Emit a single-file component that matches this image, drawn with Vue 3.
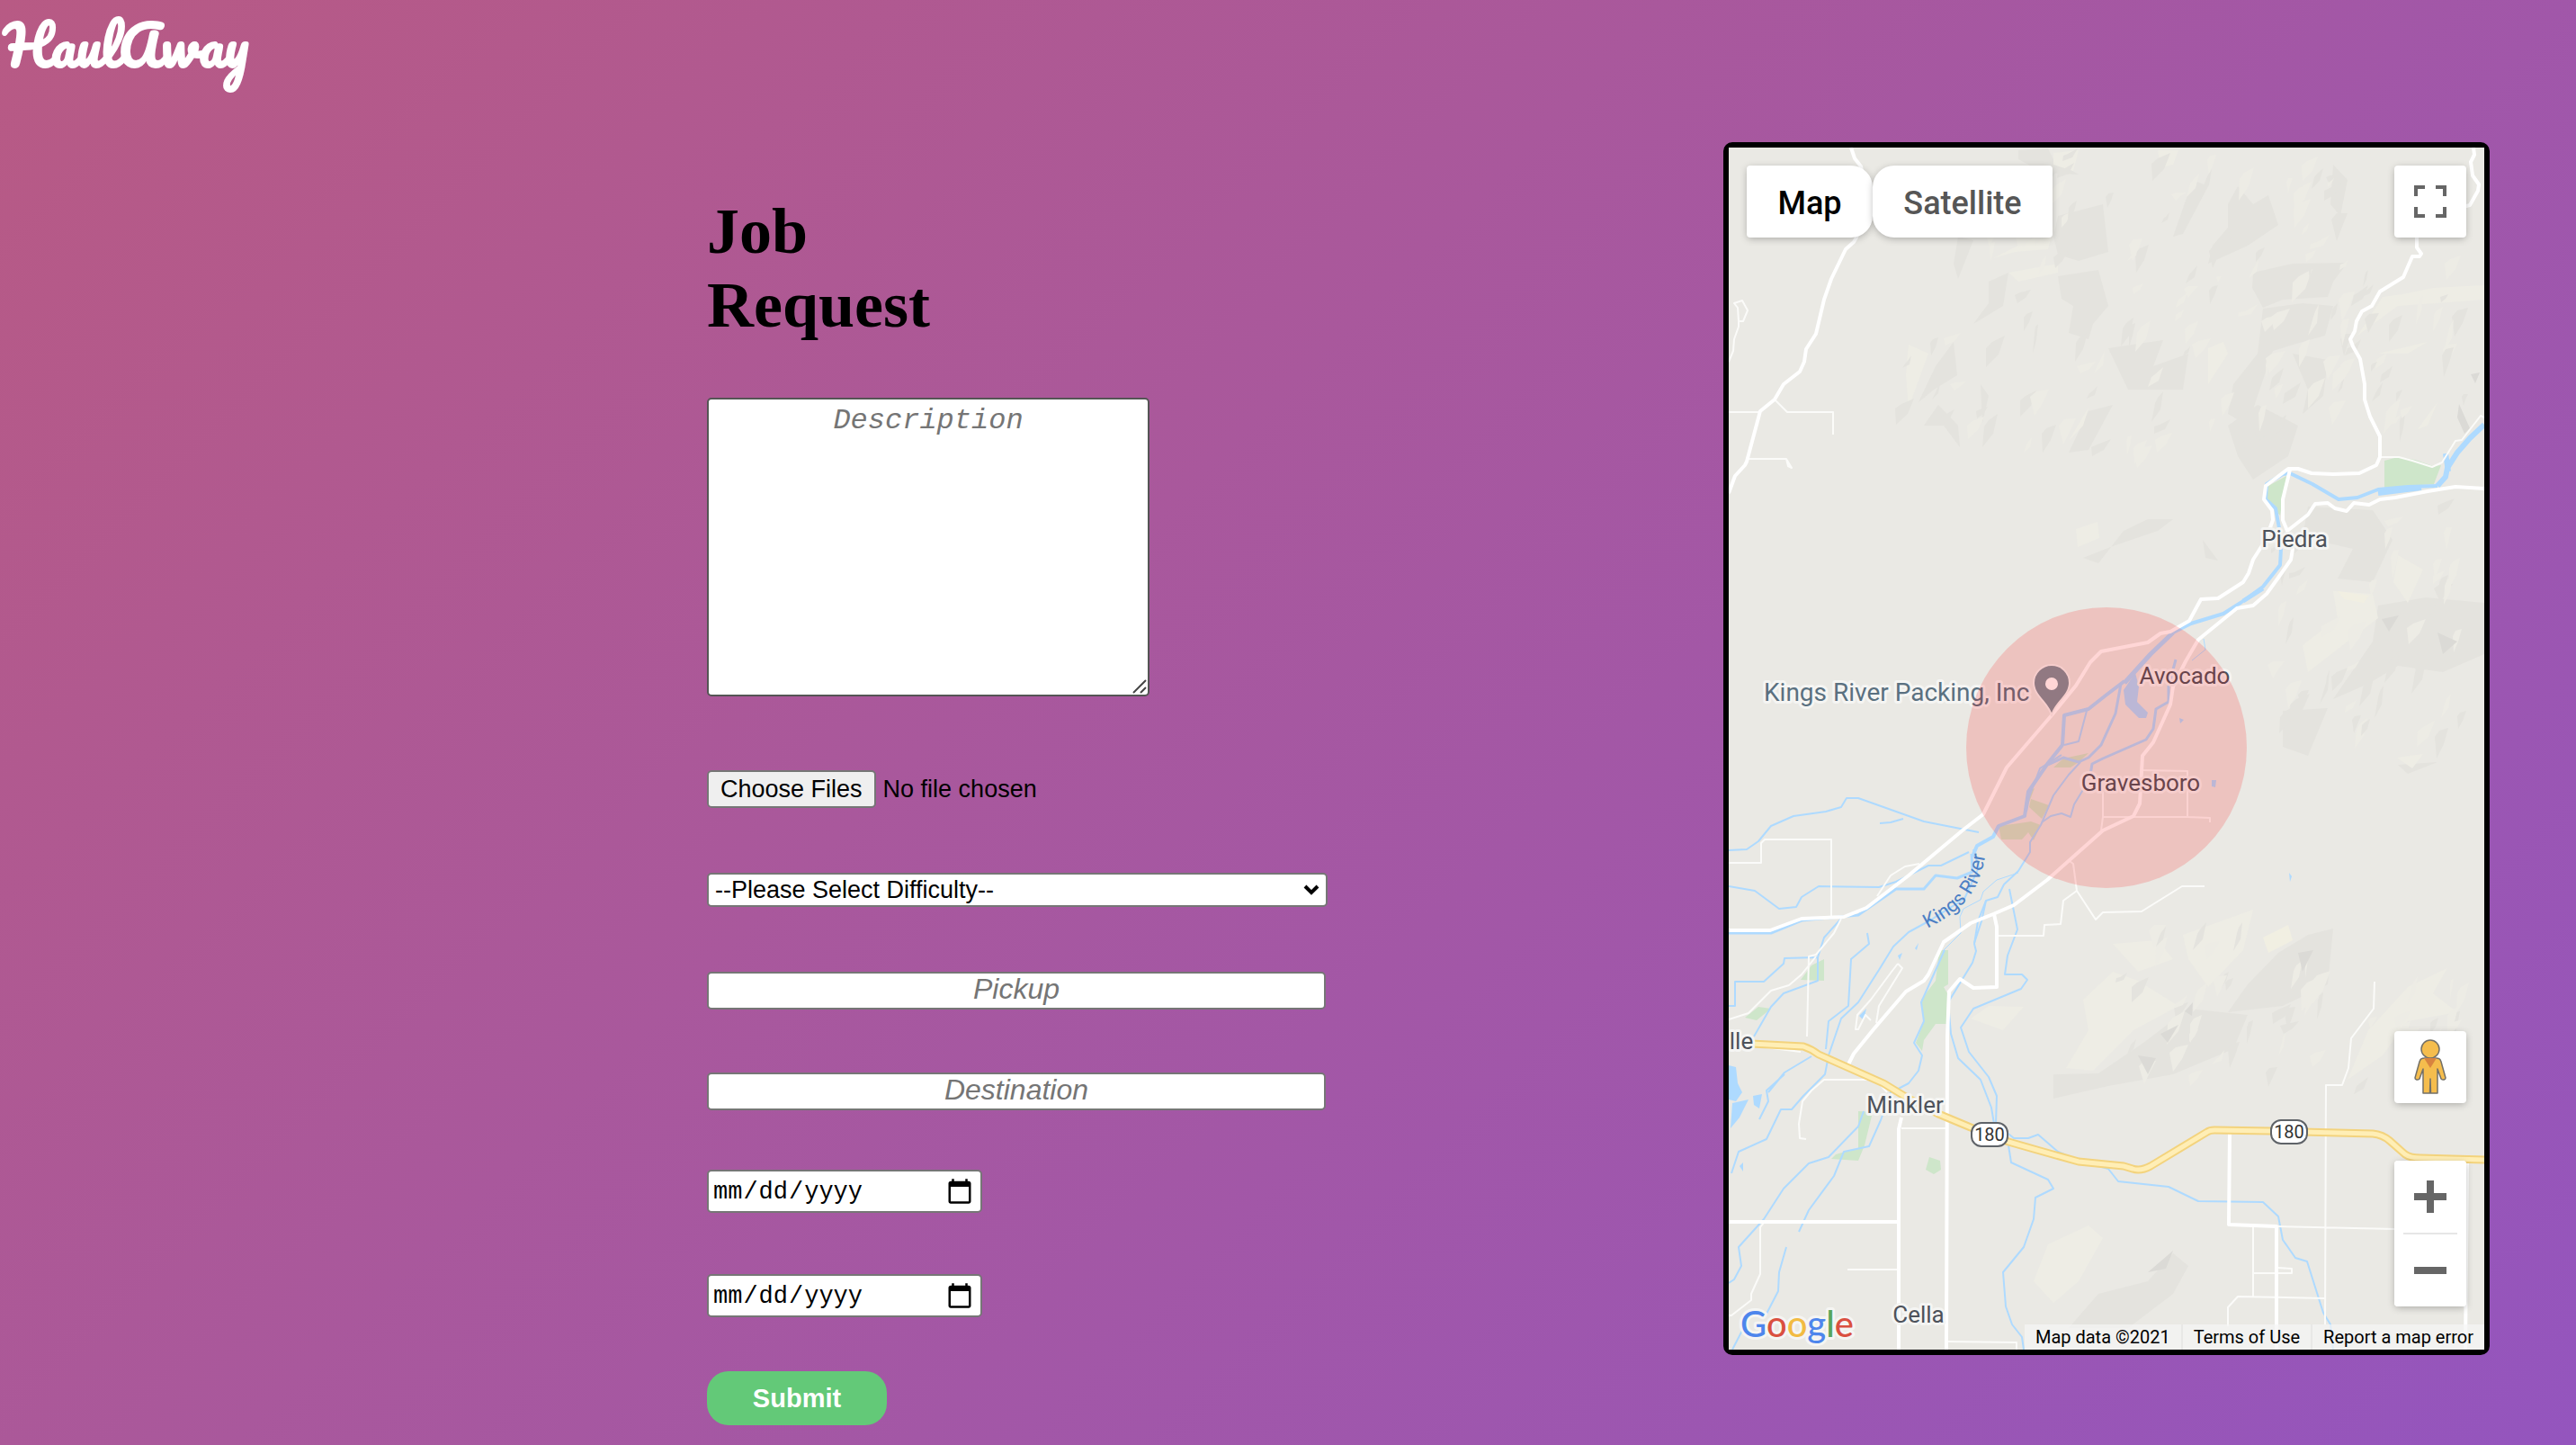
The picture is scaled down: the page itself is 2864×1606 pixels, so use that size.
<script setup>
import { ref } from 'vue'

const mapType = ref('map')
const difficulty = ref('')

const places = [
  { id: 'pickup', label: 'Pickup' },
  { id: 'destination', label: 'Destination' },
]
const dates = [
  { id: 'start', label: 'Start date' },
  { id: 'end', label: 'End date' },
]

const hillsDark = [
  '583,139 627,129 688,128 672,149 666,166 616,169 594,178 582,156',
  '594,179 638,173 672,176 663,209 638,216 605,226 588,276 577,309 555,296 561,263 588,229',
  '566,43 583,63 600,53 611,86 577,109 533,129 538,109 555,89 555,63',
  '366,76 416,63 422,116 389,126 366,119 361,99',
  '322,3 355,1 361,13 389,30 350,28 322,13',
  '366,143 411,136 422,176 405,196 400,213 378,206 383,176 370,168',
  '289,149 311,139 305,176 272,196 289,173',
  '255,99 272,103 255,146 250,129',
  '250,216 254,253 228,269 211,283 230,243',
  '280,263 289,276 282,306',
  '233,286 255,309 257,333 239,309 217,309',
  '422,223 483,214 472,243 511,229 505,269 472,269 444,269',
  '400,293 427,286 400,336 378,339',
  '627,229 666,236 661,276 638,296 644,269',
  '555,309 588,286 633,309 622,343 583,369 566,343',
  '672,19 688,36 680,76 669,63',
  '516,36 533,43 505,96 494,99',
  '722,509 775,500 840,506 840,563 794,583 744,576 711,596 672,613 716,549',
  '644,399 716,403 738,436 716,483 677,479 694,446 638,433',
  '394,456 427,443 477,426 494,413 466,413 439,426 411,462',
  '527,436 544,459 530,456',
  '616,626 666,623 644,676 616,666',
  '744,686 788,683 755,696',
  '611,895 644,875 672,868 666,930 616,954 555,961 577,930',
  '461,995 511,957 577,964 561,1002 494,1030 422,1043 361,1057 361,1030 411,1029',
  '511,1243 494,1274 444,1312 378,1312 411,1274 466,1260 494,1229',
]
const hillsDarker = [
  '788,539 810,549 794,563', '633,895 650,892 638,916', '455,1009 475,1012 466,1030',
  '480,985 500,975 488,995', '812,285 824,312 818,318 810,300', '494,1226 486,1246 466,1250',
  '726,524 745,520 734,538', '507,960 516,950 515,965', '825,252 835,250 830,262',
]
const hillsLight = [
  '672,493 716,496 722,523 688,549 644,583 638,553 677,523',
  '744,453 772,469 755,506 739,483',
  '394,947 427,916 455,926 500,954 450,981 405,1026 375,1023 400,981',
  '427,885 477,881 494,902 455,916',
  '505,875 583,847 572,892 533,933 511,902',
  '269,968 289,954 328,955 305,981',
  '355,1219 400,1198 416,1212 389,1260 361,1284 339,1260',
  '755,933 799,912 783,940 810,961 755,971 727,1009 688,1036 711,981',
  '361,6 389,3 383,26 361,19', '477,3 500,3 494,19 480,22',
  '294,123 361,89 355,113 318,116', '311,139 366,129 366,139 322,149',
  '200,219 222,229 200,289 197,253',
  '749,163 783,156 840,153 840,169 744,176 699,209 727,166',
  '722,229 777,216 755,229', '533,223 550,216 555,229 533,263',
  '378,326 400,289 394,309', '766,313 788,283 777,309',
  '386,424 410,416 412,434 388,444', '743,678 772,674 760,690',
]

// Short ridge slivers scattered over the hill regions: x, y, width, height, count.
const ranges = [
  [290, 5, 400, 330, 110],
  [600, 390, 220, 260, 50],
  [690, 120, 140, 190, 24],
  [430, 860, 230, 170, 36],
  [700, 920, 125, 120, 20],
  [190, 180, 110, 130, 12],
]
function buildRidges() {
  let seed = 17
  const next = () => {
    seed = (seed * 16807) % 2147483647
    return seed / 2147483647
  }
  const list = []
  for (const [rx, ry, rw, rh, count] of ranges) {
    for (let i = 0; i < count; i++) {
      const x = Math.round(rx + next() * rw)
      const y = Math.round(ry + next() * rh)
      const h = Math.round(6 + next() * 26)
      const w = Math.round(3 + next() * 12)
      const bend = Math.round(next() * 8)
      list.push({
        points: `${x},${y} ${x + w},${y - bend} ${x + (w >> 1)},${y + (h >> 1)} ${x - bend},${y + h} ${x - (w >> 1)},${y + (h >> 2)}`,
        light: next() > 0.5,
      })
    }
  }
  return list
}
const ridges = buildRidges()

const parks = [
  '729,348 744,344 763,347 783,354 792,353 784,374 729,378',
  '622,364 616,391 613,409 598,391 600,376',
  '234,892 244,892 244,930 239,933 243,940 242,974 230,974 217,992 215,1004 208,995 217,971 214,947 230,926',
  '106,902 106,926 80,925 92,909', '33,955 47,957 31,970 18,967',
  '144,1071 160,1072 151,1109 144,1126 114,1124 119,1119 144,1112',
  '223,1122 235,1126 236,1136 228,1141 219,1136',
  '300,754 323,751 336,749 347,753 339,770 333,761 326,769 303,769',
  '336,724 356,731 348,746 334,733', '361,689 372,679 400,673 389,683 380,689', '334,715 340,712 333,730',
]
const ponds = [
  '452,584 456,599 454,616 466,628 464,634 456,634 441,619 439,603',
  '0,1020 8,1022 10,1040 15,1050 8,1060 0,1058', '27,1054 37,1052 34,1068 28,1064',
  '4,1062 22,1058 12,1078 2,1090', '12,1132 16,1128 16,1138', '145,965 153,957 150,970',
  '207,890 211,884 209,892', '188,898 193,895 190,903', '501,634 506,636 502,640',
  '537,703 542,703 541,711 537,710', '623,806 626,810 624,816',
]
const rivers = [
  ['M840 308L824 323 810 339 799 356 797 366 788 376', 6],
  ['M788 376L755 377 722 380 699 389 678 391 649 374 624 362 616 363 598 374 597 391 608 401 612 423 614 446 613 464 594 488 569 506 550 518 514 529 494 539', 4],
  ['M797 340L800 360M770 378L722 384', 6],
  ['M594 490L572 504M494 539L469 563 440 595', 5],
  ['M440 593L419 609 400 624 373 631 371 664 355 684 333 716 329 743 300 754 294 766 276 776 271 788', 4],
  ['M436 596L430 629 414 664 400 678 389 683 372 678 355 686', 3],
  ['M497 569L489 599 489 616 475 624 472 646 464 658 416 679 404 685 402 697', 3],
  ['M398 626L389 660 373 664M370 675L346 690 334 722 331 738', 2],
  ['M391 683L378 697 361 720 347 753 335 772 335 783 322 804 306 819 299 833 286 837 281 860 273 884', 2],
  ['M395 712L384 730 380 744 370 740 358 743 348 750', 2],
  ['M322 806L298 814 283 827 280 836 261 846 257 855 258 873 238 893', 1],
  ['M0 781L20 780 33 771 47 754 72 743 108 738 125 733 131 723 144 723 217 749 278 761M168 751L180 750 194 746', 2],
  ['M267 783L236 798 222 798 186 816 167 822 100 821 81 833 75 844 56 846 29 826 0 821', 2],
  ['M270 785L271 805 254 812 230 809 217 824 186 824 144 853 81 859 47 873 0 873', 3],
  ['M272 780L278 800 262 835 222 860 200 872 183 888 167 914 144 950 125 968 111 1009 107 1030 83 1054 70 1069 58 1069 42 1102 11 1116 3 1140', 2],
  ['M154 873L156 885 136 902 133 954 111 971 108 1002M62 1030L42 1048 44 1060 34 1080M92 1010L62 1028 44 1050', 2],
  ['M286 837L277 860 273 885 275 893 271 906 244 950 247 985 255 1012 280 1036 292 1067 295 1085', 2],
  ['M312 824L321 869 310 898 307 919 326 919 332 925 325 935 272 957 258 978 267 1005 289 1033 298 1054 297 1085 317 1101 333 1101 344 1097 366 1116 389 1126 422 1135 433 1149 489 1155 522 1171 594 1172 611 1188 616 1214 630 1234 643 1238 661 1295 669 1308 672 1336', 2],
  ['M311 1109L314 1128 355 1147 361 1157 341 1167 339 1191 328 1222 305 1250 308 1288 315 1308 326 1322 328 1336', 2],
  ['M181 1047L169 1081 156 1110 128 1116 117 1143 89 1181 78 1205M150 1071L144 1088 111 1122 89 1129 61 1157 39 1191 11 1222 14 1243 6 1258 0 1262', 2],
  ['M240 892L214 950 217 971 206 995 215 1009 211 1026 200 1040 181 1050M64 1222L56 1250 55 1271 40 1300M20 1305L4 1336', 2],
  ['M0 954L7 954 7 927 39 927 61 907 62 901 99 900 106 878 125 857M99 900L99 926 61 940 47 955 28 988', 2],
  ['M528 546L530 558 515 570', 1],
]
const lanes = [
  'M6 173L15 170 21 181 16 193 11 193 10 178ZM11 193L11 199 6 213 5 226 0 238',
  'M0 294H33M51 280L65 294H116V319M20 346H64L70 356 66 354 64 346',
  'M724 344L745 344 760 348 782 355 793 350 808 326 815 325 836 298 840 300',
  'M0 795H36V773L40 769H114V854M125 857L117 873 97 897 89 899 87 988M97 899L81 919 67 931 47 937 22 962 0 969',
  'M188 907L193 912 167 954 164 973M188 907L181 916 158 947 143 964 141 980 144 980 152 964 158 970',
  'M299 876L350 876 351 864 369 863 372 837 387 826 383 796 379 793M387 826L408 858 416 850 459 849 504 821 529 821',
  'M460 692L510 693V744H416V716M510 744L535 745V750M416 744L414 759',
  'M39 1195L35 1200 35 1252 25 1274 25 1281 3 1298 0 1298M132 1247H189M243 1327L320 1328V1336M192 1090H241',
  'M164 1036H106L92 1048 82 1060 78 1085 79 1101 86 1102M164 1036L176 1050M25 998L80 1005',
  'M609 1199L741 1202M583 1200V1277M555 1310V1289L566 1277 663 1279M718 927L717 957 692 990 689 1023 682 1042H664L663 1308',
  'M583 1251H626V1246L610 1245M212 796L196 799 180 809 165 832',
]
const roads = [
  'M136 0L140 12 147 21 155 60 142 100 139 105 130 113 114 146 106 169 97 207 86 224 84 238 79 249 61 263 51 280 35 293 20 349 18 353 7 365 0 384',
  'M828 0L829 8 825 16 827 31 834 41 833 48 824 64 780 75 765 100 765 111 770 118 768 121 760 121 750 144 724 160 715 176 704 182 698 193 696 204 691 213 694 221 702 235 707 263 707 280 713 299 724 321 724 344 720 353 701 362 672 363 648 362 633 357 622 357 597 376 595 391 604 403 605 414 597 436 583 458 578 473 572 483 544 501 525 502 512 526 491 538 480 540 466 550 414 560 402 572 386 598 359 631 309 689 283 741 261 758 200 809 153 845 128 855 81 857 46 870 0 870',
  'M624 358L616 391 616 414 621 426',
  'M840 379L808 377 777 382 741 389 724 391 712 397 695 395 687 404 674 401 666 395 652 396 644 408 621 426 627 446 625 458 611 478 598 496 583 509 565 512 522 547 508 571 494 599 491 619 472 661 460 676 457 729 450 743 416 759 354 814 317 842 294 852 269 862 239 883 222 919 217 926 197 938 161 980 139 1007 133 1019',
  'M295 852L298 866 298 933 272 934 257 924 245 938 243 988 242 1336M192 1078L189 1091V1336M0 1194H189',
  'M557 1094L556 1197 609 1199V1336M821 1126L819 1336',
]
const highway = 'M0 996H25L83 999Q92 1002 100 1008L172 1040 200 1057 233 1074 269 1089 311 1105 339 1113 389 1127 439 1132 449 1135Q458 1138 469 1132L532 1094Q535 1092 540 1092L602 1093 716 1096Q727 1097 735 1104L752 1119Q758 1123 769 1123L840 1125'

const towns = [
  { name: 'Piedra', x: 629, y: 444 },
  { name: 'Avocado', x: 507, y: 596 },
  { name: 'Gravesboro', x: 458, y: 715 },
  { name: 'Minkler', x: 196, y: 1073 },
  { name: 'Cella', x: 211, y: 1306 },
  { name: 'lle', x: 14, y: 1002 },
]
const shields = [{ x: 290, y: 1097 }, { x: 623, y: 1094 }]
</script>

<template>
  <div class="page">
    <header class="header">
      <a class="logo" href="#">HaulAway</a>
    </header>

    <main class="content">
      <form class="job-form" @submit.prevent>
        <h1>Job Request</h1>

        <div class="description">
          <textarea placeholder="Description" aria-label="Description"></textarea>
          <svg class="grip" viewBox="0 0 16 16" aria-hidden="true">
            <path d="M1 15L15 1M9 15L15 9" />
          </svg>
        </div>

        <input class="files" type="file" multiple aria-label="Choose Files" />

        <div class="difficulty">
          <select v-model="difficulty" aria-label="Difficulty">
            <option value="">--Please Select Difficulty--</option>
            <option>Easy</option>
            <option>Medium</option>
            <option>Hard</option>
          </select>
          <svg class="chevron" viewBox="0 0 18 12" aria-hidden="true">
            <path d="M2 2L9 9 16 2" />
          </svg>
        </div>

        <div class="places">
          <input v-for="place in places" :key="place.id" type="text" :placeholder="place.label" :aria-label="place.label" />
        </div>

        <div class="dates">
          <input v-for="date in dates" :key="date.id" type="date" :aria-label="date.label" />
        </div>

        <button class="submit" type="submit">Submit</button>
      </form>

      <section class="map" aria-label="Map">
        <svg class="tiles" viewBox="0 0 840 1336" preserveAspectRatio="xMidYMid slice">
          <rect width="840" height="1336" fill="#eae9e4" />
          <polygon v-for="p in hillsDark" :key="p" :points="p" fill="#e4e3de" />
          <polygon v-for="p in hillsLight" :key="p" :points="p" fill="#eeede5" />
          <polygon v-for="(r, i) in ridges" :key="i" :points="r.points" :fill="r.light ? '#edece5' : '#e4e3de'" />
          <polygon v-for="p in hillsDarker" :key="p" :points="p" fill="#dbdad6" />
          <polygon points="594,878 622,864 627,881 600,895" fill="#f1efe2" />
          <polygon points="677,493 712,498 706,506 684,502" fill="#f1efe2" />

          <polygon v-for="p in parks" :key="p" :points="p" fill="#cee6ca" />
          <polygon v-for="p in ponds" :key="p" :points="p" fill="#aedaff" />
          <g fill="none" stroke-linejoin="round">
            <path v-for="[d, w] in rivers" :key="d" :d="d" stroke="#aedaff" :stroke-width="w" />
            <path v-for="d in lanes" :key="d" :d="d" stroke="#fbfbf9" stroke-width="2" />
            <path v-for="d in roads" :key="d" :d="d" stroke="#fff" stroke-width="4" />
            <path :d="highway" stroke="#f3d37d" stroke-width="9" />
            <path :d="highway" stroke="#ffeeb5" stroke-width="5" />
          </g>

          <g v-for="s in shields" :key="s.x">
            <rect :x="s.x - 20" :y="s.y - 13" width="40" height="26" rx="11" fill="#fff" stroke="#5f6368" stroke-width="2" />
            <text class="shield" :x="s.x" :y="s.y + 7">180</text>
          </g>

          <text v-for="t in towns" :key="t.name" class="town" :x="t.x" :y="t.y">{{ t.name }}</text>
          <text class="business" x="39" y="615">Kings River Packing, Inc</text>
          <path id="river-line" d="M221 868C255 850 280 832 286 780" fill="none" />
          <text class="river-name"><textPath href="#river-line">Kings River</textPath></text>

          <path d="M359 632C357 618 339 610 339 595A20 20 0 0 1 379 595C379 610 361 618 359 632Z" fill="#7d919b" stroke="#f5f5f3" stroke-width="2" />
          <circle cx="359" cy="596" r="7" fill="#fff" />

          <circle cx="420" cy="667" r="156" fill="#f00" fill-opacity="0.16" />

          <text class="brand" x="13" y="1322"><tspan fill="#4e86ec">G</tspan><tspan fill="#da5040">o</tspan><tspan fill="#f2bb42">o</tspan><tspan fill="#4e86ec">g</tspan><tspan fill="#58a65c">l</tspan><tspan fill="#da5040">e</tspan></text>
        </svg>

        <div class="map-types">
          <button type="button" :class="{ active: mapType === 'map' }" @click="mapType = 'map'">Map</button>
          <button type="button" :class="{ active: mapType === 'satellite' }" @click="mapType = 'satellite'">Satellite</button>
        </div>

        <button class="control fullscreen" type="button" aria-label="Toggle fullscreen view">
          <svg width="36" height="36" viewBox="0 0 18 18">
            <path fill="#666" d="M0 0v6h2V2h4V0H0zm16 0h-4v2h4v4h2V0h-2zm0 16h-4v2h6v-6h-2v4zM2 12H0v6h6v-2H2v-4z" />
          </svg>
        </button>

        <div class="side-controls">
          <button class="control" type="button" aria-label="Street View">
            <svg width="36" height="62" viewBox="0 0 36 62">
              <g fill="#f5bd4d" stroke="#737068" stroke-width="1.5" stroke-linejoin="round">
                <path d="M12 21h12c4 0 5 1 6 4l5 18c0 2-3 3-5 1l-4-11v27h-7.500l-.5-16-.5 16H10V33L6 44c-2 2-5 1-5-1l5-18c1-3 2-4 6-4z" />
                <circle cx="18" cy="11" r="10" />
              </g>
              <path d="M11 21h14l-7 11z" fill="#d8843f" />
            </svg>
          </button>
          <div class="zoom">
            <button type="button" aria-label="Zoom in">
              <svg width="36" height="36" viewBox="0 0 36 36"><path fill="#666" d="M14 0h8v14h14v8H22v14h-8V22H0v-8h14z" /></svg>
            </button>
            <hr />
            <button type="button" aria-label="Zoom out">
              <svg width="36" height="36" viewBox="0 0 36 36"><path fill="#666" d="M0 14h36v8H0z" /></svg>
            </button>
          </div>
        </div>

        <footer class="legal">
          <span>Map data ©2021</span>
          <a href="#">Terms of Use</a>
          <a href="#">Report a map error</a>
        </footer>
      </section>
    </main>
  </div>
</template>

<style>
body {
  margin: 0;
}
</style>

<style scoped>
.page {
  box-sizing: border-box;
  min-height: 100vh;
  background: linear-gradient(135deg, #b85a84, #9455be);
  font-family: "Liberation Sans", Arial, sans-serif;
}

.header {
  height: 100px;
  padding-left: 4px;
}

.logo {
  color: #fff;
  font: 700 60px/100px Pacifico, cursive;
  text-decoration: none;
}

.content {
  display: grid;
  grid-template-columns: 786fr 1130fr 852fr 96fr;
  align-items: start;
}

.job-form {
  grid-column: 2;
  display: flex;
  flex-direction: column;
  align-items: flex-start;
  padding: 116px 0 22px;
}

h1 {
  width: 300px;
  margin: 0 0 62px;
  font: bold 72px/82px "Liberation Serif", "Times New Roman", serif;
}

input,
select,
textarea {
  box-sizing: border-box;
  margin: 0;
  border: 2px solid #767676;
  border-radius: 5px;
  background: #fff;
  color: #000;
}

::placeholder {
  color: #757575;
  font-style: italic;
}

.description {
  position: relative;
  width: 492px;
  height: 332px;
  margin-bottom: 82px;
}

.description textarea {
  width: 100%;
  height: 100%;
  padding: 6px 4px;
  border-color: #555;
  font: 32px/36px "Liberation Mono", "Courier New", monospace;
  text-align: center;
  resize: none;
}

.grip {
  position: absolute;
  right: 3px;
  bottom: 3px;
  width: 16px;
  height: 16px;
  fill: none;
  stroke: #444;
  stroke-width: 2;
}

.files {
  height: 42px;
  margin-bottom: 72px;
  padding: 0;
  border: 0;
  background: none;
  font: 27px/38px "Liberation Sans", Arial, sans-serif;
}

.files::file-selector-button {
  box-sizing: border-box;
  height: 42px;
  margin: 0 8px 0 0;
  padding: 0 13px;
  border: 2px solid #767676;
  border-radius: 5px;
  background: #efefef;
  color: #000;
  font: inherit;
}

.difficulty {
  position: relative;
  width: 690px;
  max-width: 100%;
  height: 38px;
  margin-bottom: 72px;
}

.difficulty select {
  width: 100%;
  height: 100%;
  padding: 0 7px;
  appearance: none;
  font: 27px/34px "Liberation Sans", Arial, sans-serif;
}

.chevron {
  position: absolute;
  top: 13px;
  right: 9px;
  width: 18px;
  height: 12px;
  fill: none;
  stroke: #000;
  stroke-width: 4;
  pointer-events: none;
}

.places {
  display: flex;
  flex-direction: column;
  gap: 70px;
  width: 688px;
  max-width: 100%;
  margin-bottom: 66px;
}

.places input {
  height: 42px;
  padding: 0 4px 4px;
  font: 32px/34px "Liberation Sans", Arial, sans-serif;
  text-align: center;
}

.dates {
  display: flex;
  flex-direction: column;
  gap: 68px;
  margin-bottom: 60px;
}

.dates input {
  width: 306px;
  height: 48px;
  padding: 2px 7px 0 4px;
  font: 27px/40px "Liberation Mono", "Courier New", monospace;
}

.dates input::-webkit-calendar-picker-indicator {
  width: 32px;
  height: 32px;
  padding: 0;
}

.submit {
  width: 200px;
  height: 60px;
  padding: 0;
  border: 0;
  border-radius: 24px;
  background: #63c978;
  color: #fff;
  font: bold 29px/60px "Liberation Sans", Arial, sans-serif;
}

.map {
  grid-column: 3;
  position: relative;
  margin-top: 58px;
  border: 6px solid #000;
  border-radius: 10px;
  font-family: Roboto, Arial, sans-serif;
}

.tiles {
  display: block;
  width: 100%;
}

.town,
.business,
.brand {
  paint-order: stroke;
  stroke: #f5f5f3;
  stroke-width: 6px;
  stroke-linejoin: round;
}

.town {
  fill: #4d525b;
  font-size: 26px;
  text-anchor: middle;
}

.business {
  fill: #5a7080;
  font-size: 28px;
}

.shield {
  fill: #333;
  font-size: 20px;
  text-anchor: middle;
}

.river-name {
  fill: #4c7fc4;
  font-size: 22px;
}

.brand {
  font: 500 40px Lato, sans-serif;
}

.map button {
  display: flex;
  align-items: center;
  justify-content: center;
  padding: 0;
  border: 0;
  background: #fff;
}

.map-types {
  position: absolute;
  top: 20px;
  left: 20px;
  display: flex;
}

.map .map-types button {
  box-sizing: border-box;
  width: 140px;
  height: 80px;
  padding-top: 4px;
  border-radius: 4px 24px 24px 4px;
  box-shadow: 0 2px 8px -1px rgba(0, 0, 0, 0.3);
  color: #565656;
  font: 500 36px/76px Roboto, Arial, sans-serif;
}

.map .map-types button + button {
  width: 200px;
  border-radius: 24px 4px 4px 24px;
}

.map .map-types .active {
  color: #000;
}

.map .control {
  width: 80px;
  height: 80px;
  border-radius: 4px;
  box-shadow: 0 2px 8px -1px rgba(0, 0, 0, 0.3);
}

.fullscreen {
  position: absolute;
  top: 20px;
  right: 20px;
}

.side-controls {
  position: absolute;
  right: 20px;
  bottom: 48px;
  display: flex;
  flex-direction: column;
  gap: 64px;
}

.zoom {
  width: 80px;
  border-radius: 4px;
  background: #fff;
  box-shadow: 0 2px 8px -1px rgba(0, 0, 0, 0.3);
}

.zoom button {
  width: 80px;
  height: 80px;
  border-radius: 4px;
}

.zoom hr {
  height: 2px;
  margin: 0 10px;
  border: 0;
  background: #e6e6e6;
}

.legal {
  position: absolute;
  right: 0;
  bottom: 0;
  display: flex;
  background: rgba(245, 245, 245, 0.7);
  font-size: 20px;
  line-height: 28px;
}

.legal > * {
  padding: 0 12px;
  color: #000;
  text-decoration: none;
}

.legal > * + * {
  border-left: 2px solid #e8e8e6;
}
</style>
